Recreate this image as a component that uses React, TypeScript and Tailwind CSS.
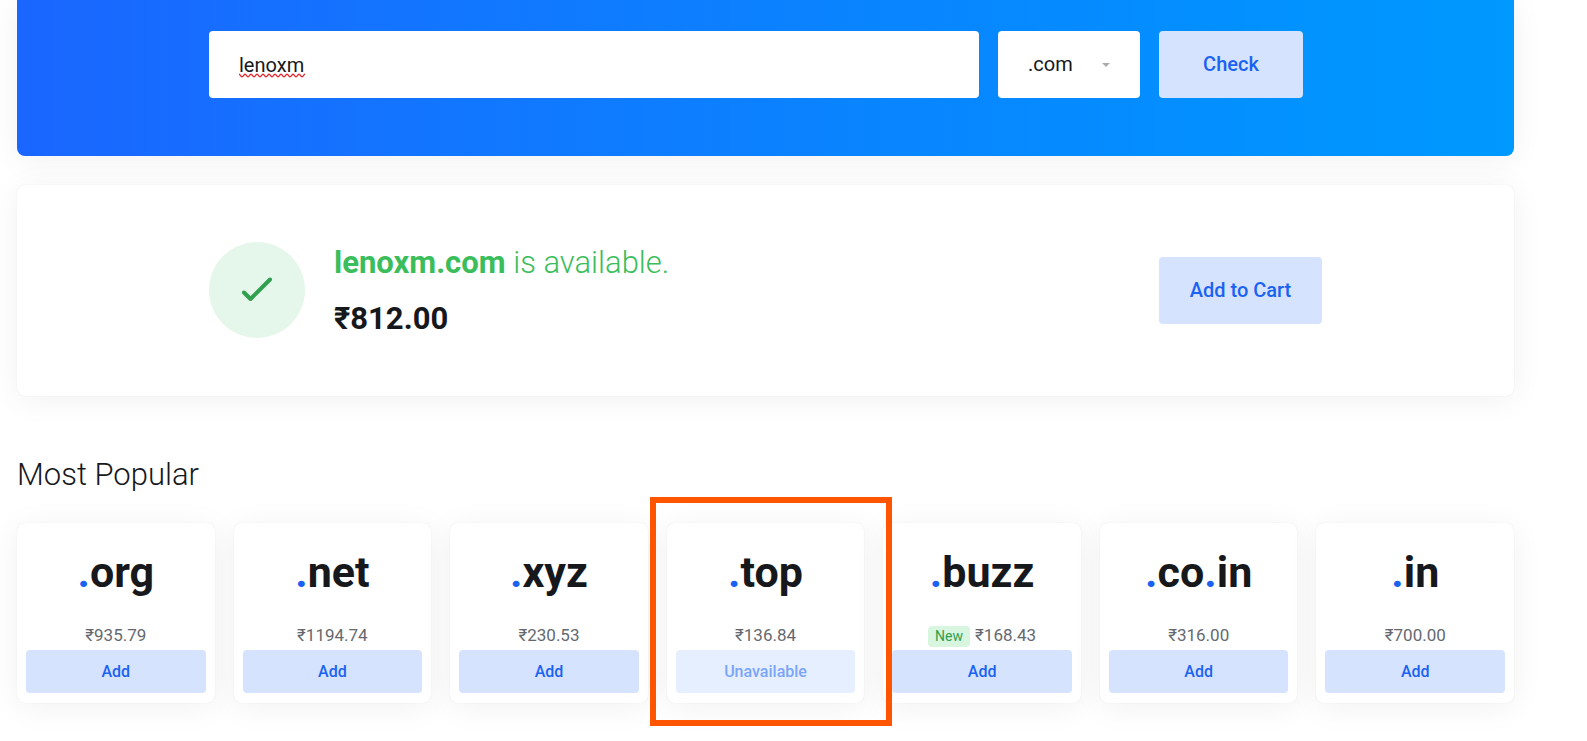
import React, { useState } from "react";

type Tld = { name: string; price: string; isNew?: boolean; unavailable?: boolean };

const tlds: Tld[] = [
  { name: ".org", price: "₹935.79" },
  { name: ".net", price: "₹1194.74" },
  { name: ".xyz", price: "₹230.53" },
  { name: ".top", price: "₹136.84", unavailable: true },
  { name: ".buzz", price: "₹168.43", isNew: true },
  { name: ".co.in", price: "₹316.00" },
  { name: ".in", price: "₹700.00" },
];

const cardShadow = "shadow-[0_0_1px_rgba(0,0,0,0.12),0_4px_32px_rgba(0,0,0,0.06)]";

function SearchBar() {
  const [query, setQuery] = useState("lenoxm");
  return (
    <section className="rounded-b-lg bg-linear-to-r from-[#1a66ff] to-[#0099ff] px-48 pt-[31px] pb-[58px] shadow-[0_4px_32px_rgba(0,0,0,0.06)]">
      <form className="flex gap-[19px] pr-[19px]" onSubmit={(e) => e.preventDefault()}>
        <div className="relative min-w-0 flex-1">
          <input
            type="text"
            aria-label="Domain name"
            spellCheck={false}
            value={query}
            onChange={(e) => setQuery(e.target.value)}
            className="h-[67px] w-full rounded bg-white px-[30px] text-xl text-[#16181b] outline-none"
          />
          {query === "lenoxm" && (
            <svg
              className="pointer-events-none absolute top-[42px] left-[30px] h-[5px] w-[66px]"
              viewBox="0 0 66 5"
              fill="none"
              stroke="#e0282e"
              strokeWidth="1.4"
              aria-hidden="true"
            >
              <path d="M0 1.200c1.500 0 1.500 2.600 3 2.600s1.500-2.600 3-2.600 1.500 2.600 3 2.600 1.500-2.600 3-2.600 1.500 2.600 3 2.600 1.500-2.600 3-2.600 1.500 2.600 3 2.600 1.500-2.600 3-2.600 1.500 2.600 3 2.600 1.500-2.600 3-2.600 1.500 2.600 3 2.600 1.500-2.600 3-2.600 1.500 2.600 3 2.600 1.500-2.600 3-2.600 1.500 2.600 3 2.600 1.500-2.600 3-2.600 1.500 2.600 3 2.600 1.500-2.600 3-2.600 1.500 2.600 3 2.600 1.500-2.600 3-2.600 1.500 2.600 3 2.600 1.500-2.600 3-2.600" />
            </svg>
          )}
        </div>
        <div className="relative">
          <select
            aria-label="Extension"
            defaultValue=".com"
            className="h-[67px] w-[142px] appearance-none rounded bg-white pr-12 pb-0.5 pl-[30px] text-xl text-[#16181b] outline-none"
          >
            <option>.com</option>
            {tlds.map((t) => (
              <option key={t.name}>{t.name}</option>
            ))}
          </select>
          <svg
            className="pointer-events-none absolute top-8 right-[30px] h-1 w-2"
            viewBox="0 0 8 4"
            fill="#a9abae"
            aria-hidden="true"
          >
            <path d="M0 0h8L4 4z" />
          </svg>
        </div>
        <button
          type="submit"
          className="h-[67px] w-36 rounded bg-[#d6e3ff] pb-0.5 text-xl font-medium text-[#1a62f2]"
        >
          Check
        </button>
      </form>
    </section>
  );
}

function Result() {
  return (
    <section className={`flex items-center rounded-lg bg-white px-48 pt-[57px] pb-[58px] ${cardShadow}`}>
      <div className="flex size-24 shrink-0 items-center justify-center rounded-full bg-[#e5f7eb]">
        <svg
          className="size-9"
          viewBox="0 0 36 36"
          fill="none"
          stroke="#2fa04e"
          strokeWidth="4"
          strokeLinecap="round"
          strokeLinejoin="round"
          aria-hidden="true"
        >
          <path d="M5 20.5 11.5 27 31 7.500" />
        </svg>
      </div>
      <div className="ml-[29px] flex-1">
        <p className="text-[31px] leading-[42px] font-light text-[#3bbd5b]">
          <strong className="font-bold">lenoxm.com</strong> is available.
        </p>
        <p className="mt-4 text-[31px] leading-[38px] font-bold text-[#16181b]">₹812.00</p>
      </div>
      <button
        type="button"
        className="h-[67px] w-[163px] rounded bg-[#d6e3ff] text-xl font-medium text-[#1a62f2]"
      >
        Add to Cart
      </button>
    </section>
  );
}

function TldCard({ tld }: { tld: Tld }) {
  return (
    <li className={`relative flex-1 rounded-lg bg-white px-[9px] pt-[19px] pb-2.5 text-center ${cardShadow}`}>
      <h3 className="text-[43px] leading-[60px] font-bold text-[#16181b]">
        {tld.name.split(/(\.)/).map((part, i) =>
          part === "." ? (
            <span key={i} className="text-[#1a62f2]">
              .
            </span>
          ) : (
            part
          ),
        )}
      </h3>
      <p className="mt-[19px] flex h-[29px] items-center justify-center gap-[5px] text-[17px] text-[#65696f]">
        {tld.isNew && (
          <span className="mt-0.5 rounded bg-[#d8f5df] px-[7px] text-sm leading-[21px] text-[#2fa04e]">New</span>
        )}
        <span>{tld.price}</span>
      </p>
      <button
        type="button"
        disabled={tld.unavailable}
        className="h-[43px] w-full rounded bg-[#d6e3ff] text-base font-medium text-[#1a62f2] disabled:bg-[#e6efff] disabled:text-[#7aa5f8]"
      >
        {tld.unavailable ? "Unavailable" : "Add"}
      </button>
      {tld.unavailable && (
        <div className="pointer-events-none absolute -top-[26px] -right-7 -bottom-[23px] -left-[17px] z-10 border-6 border-[#ff5500]" />
      )}
    </li>
  );
}

export default function App() {
  return (
    <main className="overflow-x-hidden bg-white pr-[73px] pb-[37px] pl-[17px] font-[Roboto,sans-serif]">
      <SearchBar />
      <div className="mt-[29px]">
        <Result />
      </div>
      <h2 className="mt-[59px] text-[31px] leading-10 font-light text-[#16181b]">Most Popular</h2>
      <ul className="mt-7 flex gap-[19px]">
        {tlds.map((tld) => (
          <TldCard key={tld.name} tld={tld} />
        ))}
      </ul>
    </main>
  );
}
